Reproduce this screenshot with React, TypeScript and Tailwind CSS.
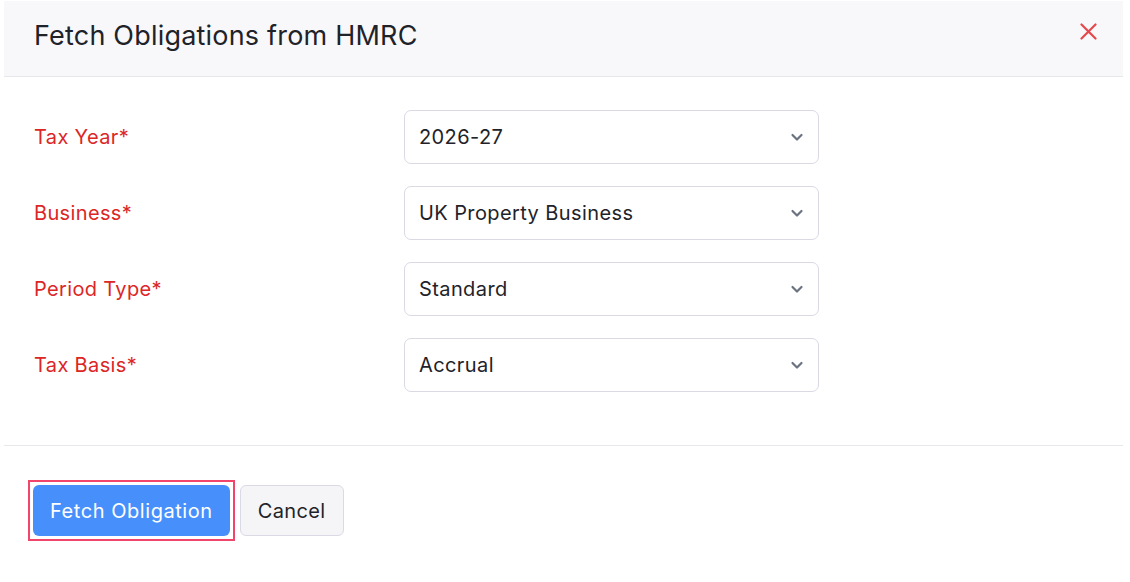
const fields = [
    { label: "Tax Year*", value: "2026-27" },
    { label: "Business*", value: "UK Property Business" },
    { label: "Period Type*", value: "Standard" },
    { label: "Tax Basis*", value: "Accrual" },
];

const Chevron = () => (
    <svg width="16" height="16" viewBox="0 0 16 16" fill="none" className="text-[#6b7280]">
        <path d="M3.5 6l4.5 4.5L12.5 6" stroke="currentColor" strokeWidth="2.2" strokeLinecap="round" strokeLinejoin="round" />
    </svg>
);

export default function App() {
    return (
        <div className="w-full h-[582px] bg-white pl-1 pr-[7px] pt-px font-['Inter',sans-serif]">
            {/* Cabecera */}
            <div className="h-[76px] bg-[#f8f8fa] border-b border-[#e7e8ec] flex items-center justify-between pl-[30px] pr-[26px]">
                <h1 className="text-[27px] leading-none tracking-[0.2px] text-[#1f2329] pb-[7px]">Fetch Obligations from HMRC</h1>
                <button className="text-[#e5484d] pb-[14px]">
                    <svg width="17" height="17" viewBox="0 0 17 17" fill="none">
                        <path d="M1.5 1.5l14 14M15.5 1.5l-14 14" stroke="currentColor" strokeWidth="2.2" strokeLinecap="round" />
                    </svg>
                </button>
            </div>

            {/* Campos */}
            <div className="pt-[33px] pb-[53px] pl-[30px] flex flex-col gap-[22px] border-b border-[#e7e8ec]">
                {fields.map((f) => (
                    <div key={f.label} className="flex items-center">
                        <label className="w-[370px] text-[20px] tracking-[0.35px] text-[#dc2626]">{f.label}</label>
                        <div className="w-[415px] h-[54px] rounded-[7px] border border-[#d9dae4] bg-white flex items-center justify-between pl-[14px] pr-[13px]">
                            <span className="text-[20px] tracking-[0.4px] text-[#1f2329]">{f.value}</span>
                            <Chevron />
                        </div>
                    </div>
                ))}
            </div>

            {/* Acciones */}
            <div className="pt-[34px] pl-[24px] flex items-center gap-[5px]">
                <div className="border-2 border-[#f2456b] p-[3px]">
                    <button className="h-[51px] px-[17px] rounded-[6px] bg-[#4790fc] text-white text-[20px] tracking-[0.55px]">
                        Fetch Obligation
                    </button>
                </div>
                <button className="h-[51px] px-[17px] rounded-[6px] bg-[#f5f5f7] border border-[#d9dae4] text-[#1f2329] text-[20px] tracking-[0.4px]">
                    Cancel
                </button>
            </div>
        </div>
    );
}
